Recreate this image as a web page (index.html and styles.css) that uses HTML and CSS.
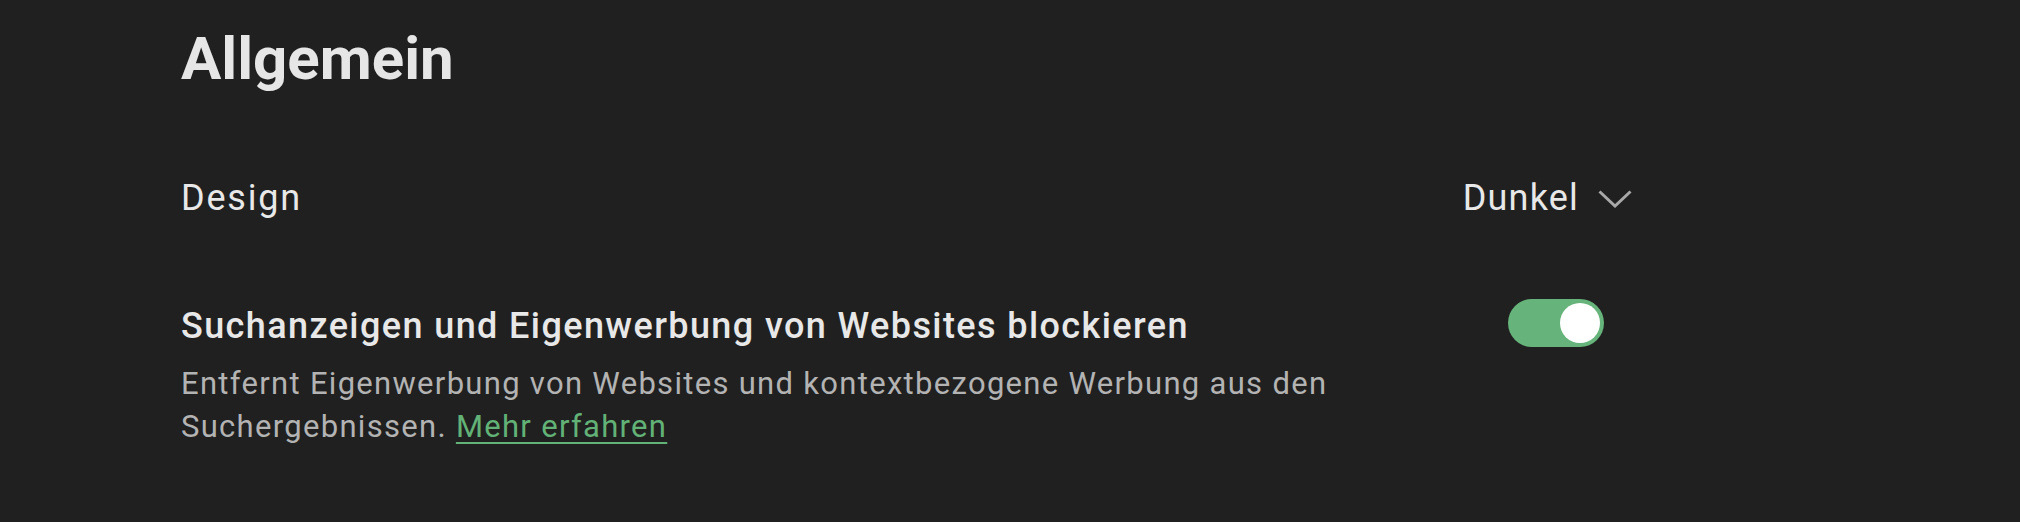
FILE: index.html
```html
<!DOCTYPE html>
<html lang="de">
<head>
  <meta charset="UTF-8">
  <title>Einstellungen</title>
  <link rel="stylesheet" href="styles.css">
</head>
<body>

<div class="page">
  <h1>Allgemein</h1>

  <div class="row row-design">
    <div class="label">Design</div>
    <div class="select">
      <span>Dunkel</span>
      <svg class="chevron" width="34" height="18" viewBox="0 0 34 18">
        <polyline points="1.5,1.5 17,16 32.5,1.5" fill="none" stroke="#a8a8a8" stroke-width="3"/>
      </svg>
    </div>
  </div>

  <div class="row row-ads">
    <div class="text">
      <div class="label label-strong">Suchanzeigen und Eigenwerbung von Websites blockieren</div>
      <div class="desc">Entfernt Eigenwerbung von Websites und kontextbezogene Werbung aus den Suchergebnissen. <a href="#">Mehr erfahren</a></div>
    </div>
    <div class="toggle on"><div class="knob"></div></div>
  </div>
</div>

</body>
</html>
```

FILE: styles.css
```css
body {
  margin: 0;
  background-color: #202020;
  font-family: Roboto, "Liberation Sans", sans-serif;
  color: #e8e8e8;
}
.page {
  width: 1451px;
  padding: 25px 0 0 181px;
}
h1 {
  margin: 0;
  font-size: 60px;
  line-height: 68px;
  font-weight: 700;
  color: #e6e6e6;
}
.row {
  display: flex;
  justify-content: space-between;
  align-items: flex-start;
}
.row-design {
  margin-top: 81px;
}
.row-ads {
  margin-top: 80px;
}
.label {
  font-size: 36px;
  line-height: 48px;
  font-weight: 400;
  letter-spacing: 1.8px;
}
.label-strong {
  font-weight: 500;
  letter-spacing: 1.4px;
}
.select {
  display: flex;
  align-items: center;
  gap: 19px;
  font-size: 36px;
  line-height: 48px;
  font-weight: 400;
  letter-spacing: 1.2px;
}
.chevron {
  margin-top: 2px;
}
.text {
  width: 1160px;
}
.desc {
  margin-top: 12px;
  font-size: 31px;
  line-height: 43px;
  letter-spacing: 1.3px;
  color: #b3b3b3;
}
.desc a {
  color: #62b277;
  text-decoration-thickness: 2px;
  text-underline-offset: 5px;
}
.toggle {
  width: 96px;
  height: 48px;
  border-radius: 24px;
  background-color: #555;
  margin-right: 28px;
  margin-top: -3px;
  display: flex;
  align-items: center;
  padding: 0 4px;
  box-sizing: border-box;
}
.toggle.on {
  background-color: #66b47b;
  justify-content: flex-end;
}
.knob {
  width: 40px;
  height: 40px;
  border-radius: 50%;
  background-color: #fff;
}
```
